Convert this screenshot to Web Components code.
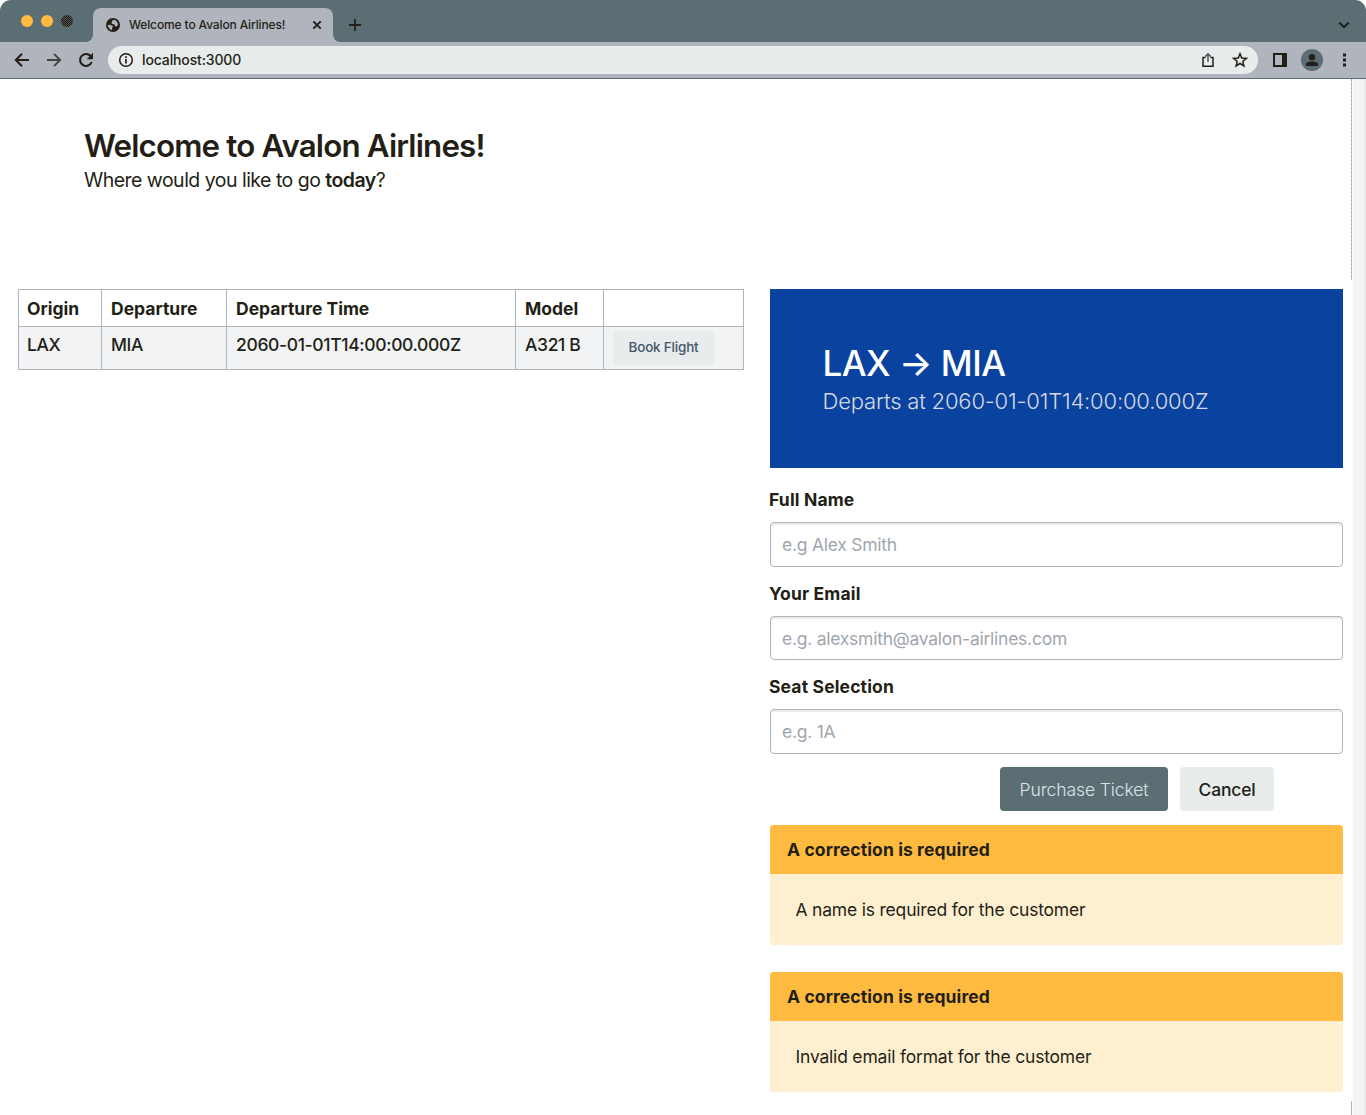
<!DOCTYPE html>
<html lang="en">
<head>
<meta charset="utf-8">
<title>Welcome to Avalon Airlines!</title>
<style>
html,body{margin:0;height:100%;background:#fff;overflow:hidden}
body{font-family:Inter,"Liberation Sans",sans-serif;color:#231f16;--steel:#5b6e74;--grey:#b0b4bd;--pale:#e8ecec;--amber:#ffba40;--cream:#ffefd1;--blue:#0a429f}
</style>
</head>
<body>
<browser-window></browser-window>
<script>
const define=(name,html)=>customElements.define(name,class extends HTMLElement{
  constructor(){super();this.attachShadow({mode:'open'}).innerHTML='<style>*{box-sizing:border-box}svg{display:block;flex:none}span{white-space:nowrap}</style>'+html;}
});

define('tab-strip',`<style>
:host{display:flex;height:42px;background:var(--steel);border-radius:11px 11px 0 0;padding:8px 15px 0 21px}
.lights{display:flex;gap:8px;height:12px;margin-top:7px}
.lights svg{width:12px;height:12px}
.tab{display:flex;width:240px;height:34px;margin-left:20px;background:var(--grey);border-radius:8px 8px 0 0;padding:0 10px 0 13px;align-items:center;position:relative}
.tab:before,.tab:after{content:"";position:absolute;bottom:0;width:7px;height:7px}
.tab:before{left:-7px;background:radial-gradient(circle at 0 0,transparent 6.5px,var(--grey) 7px)}
.tab:after{right:-7px;background:radial-gradient(circle at 100% 0,transparent 6.5px,var(--grey) 7px)}
.tab span{font-size:12px;font-weight:500;letter-spacing:-.13px;margin-left:9px;flex:1;line-height:34px}
.plus{margin:10px 0 0 15px}.chev{margin:11px 0 0 auto}
</style>
<div class="lights">
<svg viewBox="0 0 12 12"><circle cx="6" cy="6" r="6" fill="#ffba40"/></svg>
<svg viewBox="0 0 12 12"><circle cx="6" cy="6" r="6" fill="#ffba40"/></svg>
<svg viewBox="0 0 12 12"><defs><pattern id="p" width="2" height="2" patternUnits="userSpaceOnUse"><path d="M0 0h1v1H0zM1 1h1v1H1z" fill="#231f16" shape-rendering="crispEdges"/></pattern></defs><circle cx="6" cy="6" r="6" fill="#4b5450"/><circle cx="6" cy="6" r="6" fill="url(#p)"/></svg>
</div>
<div class="tab">
<svg width="14" height="14" viewBox="0 0 14 14"><circle cx="7" cy="7" r="7" fill="#231f16"/><path d="M1.800 6.800 4.600 7Q7 7.300 7.200 9L6 9.600 6.200 12.300Q2 11.200 1.800 6.800zM6.200 2.500 8.500 1.800Q11.600 3 12 6.200L11.600 7.600Q10.400 9.200 9 7.900L8.600 6.600 6.200 6Q4.800 5 6 4z" fill="#b0b4bd"/></svg>
<span>Welcome to Avalon Airlines!</span>
<svg width="12" height="12" viewBox="0 0 12 12"><path d="m2.300 2.300 7.400 7.400m0-7.400L2.300 9.700" stroke="#231f16" stroke-width="1.900"/></svg>
</div>
<svg class="plus" width="14" height="14" viewBox="0 0 14 14"><path d="M7 1v12M1 7h12" stroke="#231f16" stroke-width="1.800"/></svg>
<svg class="chev" width="14" height="12" viewBox="0 0 14 12"><path d="m2.300 3.500 4.700 4.700 4.700-4.700" fill="none" stroke="#231f16" stroke-width="2"/></svg>`);

define('nav-toolbar',`<style>
:host{display:flex;height:37px;background:var(--grey);border-bottom:1px solid var(--steel);align-items:center;padding:0 14px}
.nav{display:flex;gap:16px;margin-right:14px}
.pill{display:flex;align-items:center;width:1150px;height:28px;background:var(--pale);border-radius:14px;padding:0 10px}
.pill span{font-size:14px;font-weight:500;letter-spacing:-.13px;margin:0 auto 0 8px;line-height:28px}
.share{margin-right:16px}.side{margin-left:14px}.user{margin-left:13px}.dots{margin-left:auto}
</style>
<div class="nav">
<svg width="16" height="16" viewBox="0 0 16 16"><path d="M15 8H2.200M8 1.800 1.800 8 8 14.200" fill="none" stroke="#231f16" stroke-width="2"/></svg>
<svg width="16" height="16" viewBox="0 0 16 16"><path d="M1 8h12.800M8 1.800 14.200 8 8 14.200" fill="none" stroke="#40443f" stroke-width="1.800"/></svg>
<svg width="16" height="16" viewBox="0 0 16 16"><path d="M13.700 10A6 6 0 1 1 12.600 4" fill="none" stroke="#231f16" stroke-width="2.100"/><path d="M15 .8v6.400H8.800z" fill="#231f16"/></svg>
</div>
<div class="pill">
<svg width="16" height="16" viewBox="0 0 16 16"><circle cx="8" cy="8" r="6.300" fill="none" stroke="#231f16" stroke-width="1.500"/><path d="M8 7v4.500M8 4.200v1.700" stroke="#231f16" stroke-width="1.700"/></svg>
<span>localhost:3000</span>
<svg class="share" width="16" height="16" viewBox="0 0 16 16"><path d="M5.500 5.500H3v8.700h10V5.500h-2.500" fill="none" stroke="#231f16" stroke-width="1.500"/><path d="M8 10V2M5.200 4.600 8 1.800l2.800 2.800" fill="none" stroke="#4b5b5f" stroke-width="1.500"/></svg>
<svg width="16" height="16" viewBox="0 0 16 16"><path d="m8 1.800 1.700 4.300 4.600.3-3.500 3 1.100 4.500L8 11.500l-3.900 2.400 1.100-4.500-3.500-3 4.600-.3z" fill="none" stroke="#231f16" stroke-width="1.500"/></svg>
</div>
<svg class="side" width="16" height="16" viewBox="0 0 16 16"><path d="M1 1h14v14H1zM3 3v10h7V3z" fill="#231f16" fill-rule="evenodd"/></svg>
<svg class="user" width="22" height="22" viewBox="0 0 22 22"><circle cx="11" cy="11" r="11" fill="#5b6e74"/><circle cx="11" cy="8.200" r="3.200" fill="#231f16"/><path d="M5 17v-2q0-2.500 6-2.500t6 2.500v2z" fill="#231f16"/></svg>
<svg class="dots" width="16" height="16" viewBox="0 0 16 16"><path d="M7 1.500h3v3H7zm0 5h3v3H7zm0 5h3v3H7z" fill="#231f16"/></svg>`);

define('page-scrollbar',`<style>
:host{display:block;width:15px;flex:none;background:linear-gradient(#e8eaec,#e8eaec) 13px 0/2px 100% no-repeat,linear-gradient(#f1f3f4,#f1f3f4) 2px 0/11px 100% no-repeat}
div{width:1px;height:201px;background:repeating-linear-gradient(#a9aeb5 0 3px,#e4e6e9 3px 4px)}
i{display:block;width:1px;height:14px;margin-top:821px;background:#b0b4bd}
</style><div></div><i></i>`);

define('welcome-banner',`<style>
:host{display:flex;flex-direction:column;align-items:flex-start;padding:49px 84px 0;height:210px}
.h{font-size:31.300px;font-weight:600;line-height:36px;letter-spacing:-.82px;margin-bottom:1px}
.s{font-size:19.500px;line-height:31px;letter-spacing:-.52px}
b{font-weight:600}
</style><span class="h">Welcome to Avalon Airlines!</span><span class="s">Where would you like to go <b>today</b>?</span>`);

define('flight-table',`<style>
:host{display:grid;grid-template-columns:83px 125px 289px 88px 140px;width:726px;border:1px solid var(--grey);border-width:1px 0 0 1px;font-size:17.500px}
.h,.r{border:1px solid var(--grey);border-width:0 1px 1px 0;padding:0 9px}
.h:nth-of-type(5n+1),.r:nth-of-type(5n+1){padding-left:8px}
.h{height:37px;font-weight:700;line-height:37px;letter-spacing:0}
.r{height:43px;background:#f1f3f4;font-weight:500;line-height:36px;letter-spacing:-.35px}
.btn{width:101px;height:34px;margin-top:4px;background:var(--pale);border-radius:2px;text-align:center;font-size:13.500px;line-height:33px;letter-spacing:-.2px;color:#43566d}
</style>
<div class="h"><span>Origin</span></div><div class="h"><span>Departure</span></div><div class="h"><span>Departure Time</span></div><div class="h"><span>Model</span></div><div class="h"></div>
<div class="r"><span>LAX</span></div><div class="r"><span>MIA</span></div><div class="r"><span>2060-01-01T14:00:00.000Z</span></div><div class="r"><span>A321 B</span></div><div class="r"><div class="btn"><span>Book Flight</span></div></div>`);

define('trip-hero',`<style>
:host{display:flex;flex-direction:column;align-items:flex-start;height:179px;background:var(--blue);padding:54px 52.500px 0;color:#fff}
.h{font-size:35px;font-weight:500;line-height:41px;letter-spacing:-.5px}
.s{font-size:22px;font-weight:300;line-height:35px;letter-spacing:-.18px;color:#d5dae2}
</style><span class="h">LAX → MIA</span><span class="s">Departs at 2060-01-01T14:00:00.000Z</span>`);

define('form-field',`<style>
:host{display:flex;flex-direction:column;height:93.600px}
.l{font-size:17.500px;font-weight:700;line-height:27px;height:36px;letter-spacing:.15px;margin-left:-1px}
.i{height:44.500px;border:1px solid var(--grey);border-radius:4px;box-shadow:inset 0 2px 1px #e8ecec;padding-left:11px;line-height:43px;font-size:17.500px;letter-spacing:-.25px;color:#9fa6ae}
</style><div class="l"><slot name="label"></slot></div><div class="i"><slot></slot></div>`);

define('form-actions',`<style>
:host{display:flex;gap:12px;justify-content:flex-end;padding-right:69px;height:58px;font-size:17.500px}
div{height:44.500px;border-radius:4px;line-height:45px;text-align:center}
.p{width:168px;background:var(--steel);color:#dfe3e8;font-weight:300;letter-spacing:-.1px}
.c{width:94px;background:var(--pale);font-weight:500;letter-spacing:-.2px}
</style><div class="p"><span>Purchase Ticket</span></div><div class="c"><span>Cancel</span></div>`);

define('alert-message',`<style>
:host{display:block;border-radius:4px;overflow:hidden;background:var(--cream);height:120px;margin-bottom:27px;font-size:17.500px}
.h{height:49px;background:var(--amber);line-height:49px;padding-left:17px;font-weight:700;letter-spacing:.1px}
.b{padding-left:25.500px;line-height:71px;letter-spacing:-.2px}
</style><div class="h"><span>A correction is required</span></div><div class="b"><slot></slot></div>`);

define('booking-panel',`<style>
:host{display:block;width:573px}
.f{padding-top:18px}
</style><trip-hero></trip-hero>
<div class="f">
<form-field><span slot="label">Full Name</span><span>e.g Alex Smith</span></form-field>
<form-field><span slot="label">Your Email</span><span>e.g. alexsmith@avalon-airlines.com</span></form-field>
<form-field><span slot="label">Seat Selection</span><span>e.g. 1A</span></form-field>
<form-actions></form-actions>
<alert-message><span>A name is required for the customer</span></alert-message>
<alert-message><span>Invalid email format for the customer</span></alert-message>
</div>`);

define('browser-window',`<style>
:host{display:flex;flex-direction:column;width:1366px;height:1115px;background:#fff;overflow:hidden}
.v{display:flex;height:1036px}
main{width:1351px}
.cols{display:flex;justify-content:space-between;align-items:flex-start;padding:0 8px 0 18px}
</style><tab-strip></tab-strip><nav-toolbar></nav-toolbar>
<div class="v"><main><welcome-banner></welcome-banner><div class="cols"><flight-table></flight-table><booking-panel></booking-panel></div></main><page-scrollbar></page-scrollbar></div>`);
</script>
</body>
</html>
